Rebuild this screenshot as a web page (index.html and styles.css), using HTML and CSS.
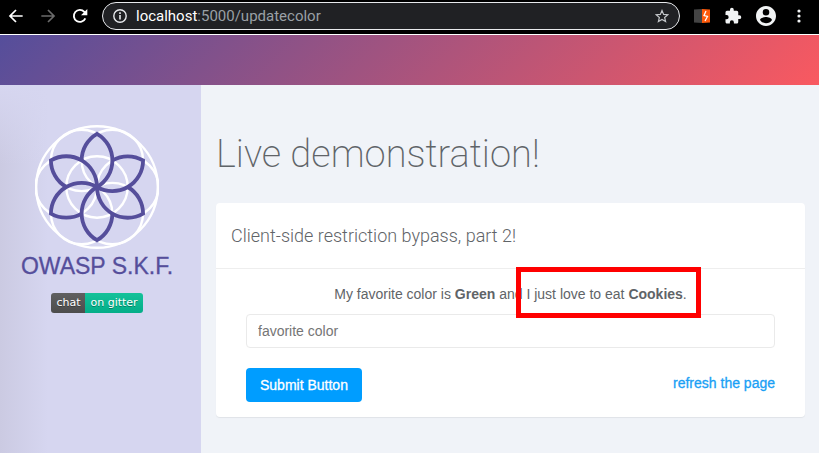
FILE: index.html
```html
<!DOCTYPE html>
<html lang="en">
<head>
<meta charset="utf-8">
<title>Live demonstration</title>
<link rel="stylesheet" href="styles.css">
</head>
<body>
<header class="browser">
  <button class="nav" aria-label="Back"><svg width="24" height="24" viewBox="0 0 24 24"><path d="M22 12H3M12 3l-9 9 9 9" fill="none" stroke="#fff" stroke-width="2.6"/></svg></button>
  <button class="nav" aria-label="Forward"><svg width="24" height="24" viewBox="0 0 24 24"><path d="M2 12h19M12 3l9 9-9 9" fill="none" stroke="#6b6b6b" stroke-width="2.6"/></svg></button>
  <button class="nav" aria-label="Reload"><svg width="24" height="24" viewBox="0 0 24 24"><path d="M20 15.500A9 9 0 1 1 18.500 5.800L21 8.500" fill="none" stroke="#fff" stroke-width="2.800"/><path d="M23 1.500v9.500h-9.500z" fill="#fff"/></svg></button>
  <div class="address">
    <svg width="14" height="14" viewBox="0 0 14 14"><circle cx="7" cy="7" r="6.200" fill="none" stroke="#e8eaed" stroke-width="1.400"/><path d="M7 6v4.500M7 3.300v1.600" stroke="#e8eaed" stroke-width="1.600"/></svg>
    <span class="url"><span class="host">localhost</span>:5000/updatecolor</span>
    <svg width="14" height="14" viewBox="0 0 24 24"><path d="M12 2.500l2.800 6.700 7.200.6-5.500 4.700 1.700 7.100-6.200-3.800-6.200 3.800 1.700-7.100L2 9.800l7.200-.6z" fill="none" stroke="#c4c7ca" stroke-width="2"/></svg>
  </div>
  <div class="tools">
    <svg width="16" height="16" viewBox="0 0 16 16"><path d="M0 1.500L8 1v14l-8-.5z" fill="#444"/><path d="M8 1l8 .5v13L8 15z" fill="#ff5a0a"/><path d="M12 3l-2 4.500 3.500 1L11 13" fill="none" stroke="#fff" stroke-width="1.300"/></svg>
    <svg width="18" height="18" viewBox="0 0 24 24"><path d="M20.500 11H19V7a2 2 0 0 0-2-2h-4V3.500a2.500 2.500 0 0 0-5 0V5H4a2 2 0 0 0-2 2v3.800h1.500a2.700 2.700 0 0 1 0 5.400H2V20c0 1.100.9 2 2 2h3.800v-1.500a2.700 2.700 0 0 1 5.400 0V22H17a2 2 0 0 0 2-2v-4h1.500a2.500 2.500 0 0 0 0-5z" fill="#f1f3f4"/></svg>
    <svg width="20" height="20" viewBox="2 2 20 20"><path d="M12 2C6.500 2 2 6.500 2 12s4.500 10 10 10 10-4.500 10-10S17.500 2 12 2zm0 3a3.300 3.300 0 1 1 0 6.600A3.300 3.300 0 0 1 12 5zm0 14.200a7.200 7.200 0 0 1-6-3.200c0-2 4-3.100 6-3.100s6 1.100 6 3.100a7.200 7.200 0 0 1-6 3.200z" fill="#f1f3f4"/></svg>
    <svg width="4" height="14" viewBox="0 0 4 14"><g fill="#f1f3f4"><circle cx="2" cy="2" r="1.600"/><circle cx="2" cy="7" r="1.600"/><circle cx="2" cy="12" r="1.600"/></g></svg>
  </div>
</header>
<div class="banner"></div>
<div class="layout">
  <aside class="sidebar">
    <svg class="logo" viewBox="-62 -62 124 124" aria-hidden="true">
      <defs><path id="petal" d="M-15.350-26.600A30.700 30.700 0 0 1 0-53.200A30.700 30.700 0 0 1 0 0"/></defs>
      <g fill="none" stroke="#fff" stroke-width="2.400">
        <circle r="60.800"/><circle r="30.700"/>
        <circle cx="30.700" r="30.700"/><circle cx="-30.700" r="30.700"/>
        <circle cx="15.350" cy="26.600" r="30.700"/><circle cx="-15.350" cy="26.600" r="30.700"/>
        <circle cx="15.350" cy="-26.600" r="30.700"/><circle cx="-15.350" cy="-26.600" r="30.700"/>
      </g>
      <g fill="none" stroke="#554e9b" stroke-width="3.800">
        <use href="#petal"/><use href="#petal" transform="rotate(60)"/><use href="#petal" transform="rotate(120)"/>
        <use href="#petal" transform="rotate(180)"/><use href="#petal" transform="rotate(240)"/><use href="#petal" transform="rotate(300)"/>
      </g>
    </svg>
    <div class="brand">OWASP S.K.F.</div>
    <a class="gitter" href="#chat"><span class="chat">chat</span><span class="on">on gitter</span></a>
  </aside>
  <main class="content">
    <h1>Live demonstration!</h1>
    <section class="card">
      <h2>Client-side restriction bypass, part 2!</h2>
      <form class="form">
        <p>My favorite color is <b>Green</b> and <span class="marked">I just love to eat <b>Cookies</b>.</span></p>
        <input type="text" placeholder="favorite color" aria-label="favorite color">
        <div class="actions"><button class="submit" type="button">Submit Button</button><a href="#refresh">refresh the page</a></div>
      </form>
    </section>
  </main>
</div>
</body>
</html>
```
FILE: styles.css
```css
* { box-sizing: border-box; }
body {
  margin: 0;
  min-height: 100vh;
  display: flex;
  flex-direction: column;
  background: #f0f3f8;
  color: #5f6468;
  font: 14px/20px "Liberation Sans", Arial, sans-serif;
}
svg { display: block; flex: none; }
button { border: 0; padding: 0; font: inherit; }

.browser {
  display: flex;
  align-items: center;
  height: 35px;
  padding: 0 18px 2px 8px;
  background: #000;
  border-bottom: 1px solid #fff;
}
.nav { width: 16px; margin-right: 16px; background: none; }
.nav svg { width: 16px; height: 16px; }
.address {
  flex: 1;
  display: flex;
  align-items: center;
  gap: 9px;
  height: 28px;
  margin-left: -2px;
  padding: 0 10px;
  border: 1px solid #e8eaed;
  border-radius: 14px;
  background: #202124;
}
.url { flex: 1; color: #9aa0a6; font: 15px/20px Roboto, sans-serif; }
.host { color: #fff; }
.tools { display: flex; align-items: center; gap: 14px; margin-left: 14px; }
.tools svg:last-child { margin-left: 7px; }

.banner { height: 50px; background: linear-gradient(135deg, #554e9b, #f95960); }

.layout { flex: 1; display: flex; }
.sidebar {
  width: 201px;
  padding: 40px 7px 0 0;
  display: flex;
  flex-direction: column;
  align-items: center;
  background:
    linear-gradient(#d6d6f0, #d6d6f000 80px),
    linear-gradient(90deg, #cbcae2, #d6d6f0 48px);
}
.logo { width: 124px; height: 124px; }
.brand { margin-top: 1px; color: #554e9b; font-size: 23px; line-height: 32px; -webkit-text-stroke: 0.3px; }
.gitter {
  display: flex;
  margin-top: 11px;
  border-radius: 3px;
  overflow: hidden;
  color: #fff;
  font: 11px/20px "DejaVu Sans", sans-serif;
  text-decoration: none;
  text-shadow: 0 1px #0005;
}
.gitter span { padding: 0 5px; }
.chat { background: linear-gradient(#606060, #4c4c4c); }
.on { background: linear-gradient(#14c29a, #04ad88); }

.content { flex: 1; padding: 44px 14px 36px 15px; }
h1 { margin: 0 0 24px; font: 200 38px/50px Roboto, sans-serif; }
.card { background: #fff; border-radius: 4px; box-shadow: 0 1px 1px #0001; }
h2 { margin: 0; padding: 21px 15px; border-bottom: 1px solid #eee; font: 300 18px/23px Roboto, sans-serif; }
.form { padding: 15px 30px; }
p { margin: 0 0 10px; text-align: center; }
.marked { position: relative; }
.marked::before {
  content: "";
  position: absolute;
  inset: -19px -14px -16px -10px;
  border: 5px solid #f00;
}
input {
  display: block;
  width: 100%;
  height: 34px;
  padding: 0 11px;
  border: 1px solid #eaeaea;
  border-radius: 4px;
  font: inherit;
}
input::placeholder { color: #757575; opacity: 1; }
.actions { display: flex; justify-content: space-between; align-items: flex-start; margin-top: 20px; }
.submit { height: 34px; padding: 0 14px; border-radius: 4px; background: #009dff; color: #fff; -webkit-text-stroke: 0.3px; }
.actions a { color: #1a9ff5; line-height: 30px; text-decoration: none; -webkit-text-stroke: 0.3px; }
```
